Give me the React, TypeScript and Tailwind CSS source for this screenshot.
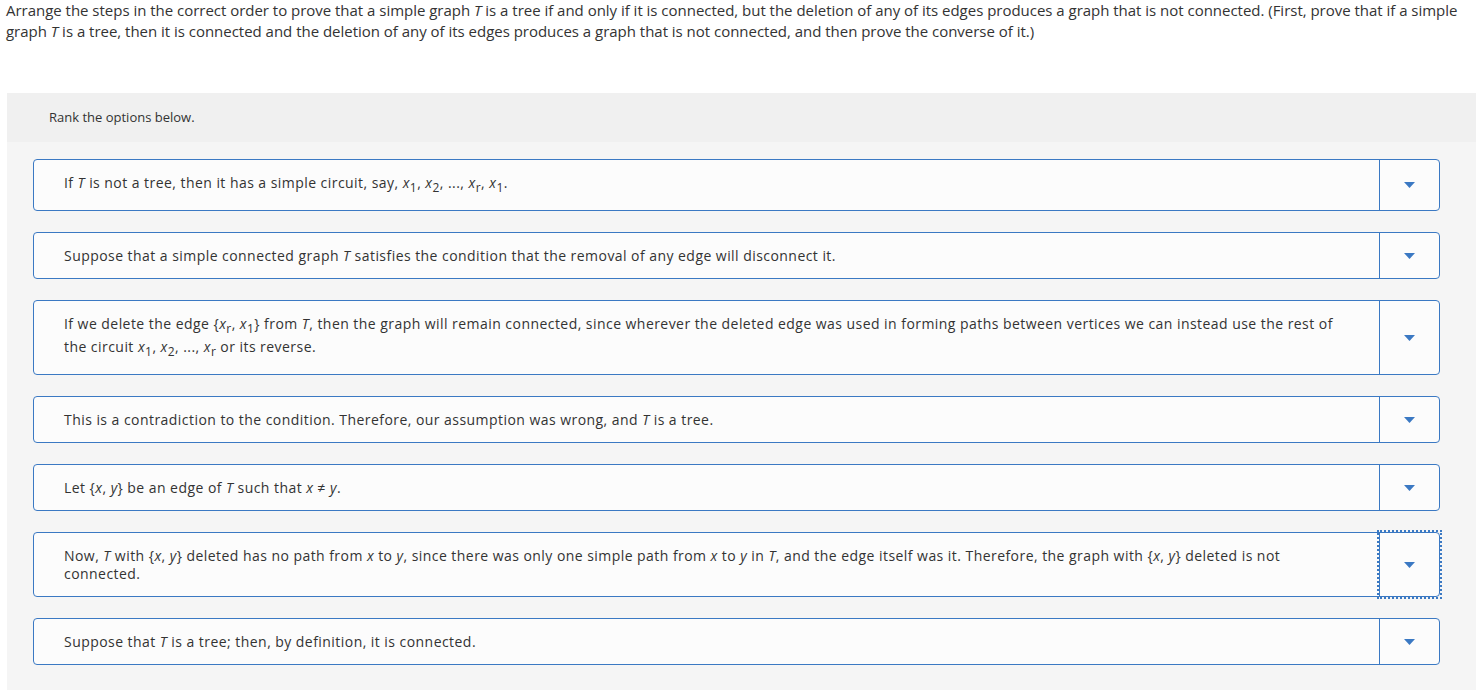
import * as React from "react";

const I = ({ children }: { children: React.ReactNode }) => <i className="italic">{children}</i>;
const X = ({ s }: { s: string }) => (
  <>
    <i>x</i>
    <sub className="bottom-0 align-[-4px] text-[12px] leading-[18px]">{s}</sub>
  </>
);

const options: { id: number; content: React.ReactNode; focused?: boolean }[] = [
  {
    id: 1,
    content: (
      <>
        If <I>T</I> is not a tree, then it has a simple circuit, say, <X s="1" />, <X s="2" />, ..., <X s="r" />, <X s="1" />.
      </>
    ),
  },
  {
    id: 2,
    content: (
      <>
        Suppose that a simple connected graph <I>T</I> satisfies the condition that the removal of any edge will disconnect it.
      </>
    ),
  },
  {
    id: 3,
    content: (
      <>
        If we delete the edge {"{"}
        <X s="r" />, <X s="1" />
        {"}"} from <I>T</I>, then the graph will remain connected, since wherever the deleted edge was used in forming paths between
        vertices we can instead use the rest of the circuit <X s="1" />, <X s="2" />, ..., <X s="r" /> or its reverse.
      </>
    ),
  },
  {
    id: 4,
    content: (
      <>
        This is a contradiction to the condition. Therefore, our assumption was wrong, and <I>T</I> is a tree.
      </>
    ),
  },
  {
    id: 5,
    content: (
      <>
        Let {"{"}
        <I>x</I>, <I>y</I>
        {"}"} be an edge of <I>T</I> such that <I>x</I> ≠ <I>y</I>.
      </>
    ),
  },
  {
    id: 6,
    focused: true,
    content: (
      <>
        Now, <I>T</I> with {"{"}
        <I>x</I>, <I>y</I>
        {"}"} deleted has no path from <I>x</I> to <I>y</I>, since there was only one simple path from <I>x</I> to <I>y</I> in{" "}
        <I>T</I>, and the edge itself was it. Therefore, the graph with {"{"}
        <I>x</I>, <I>y</I>
        {"}"} deleted is not connected.
      </>
    ),
  },
  {
    id: 7,
    content: (
      <>
        Suppose that <I>T</I> is a tree; then, by definition, it is connected.
      </>
    ),
  },
];

function Caret() {
  return (
    <svg width="11" height="6" viewBox="0 0 11 6" className="block">
      <polygon points="0,0 11,0 5.5,6" fill="#3b79c3" />
    </svg>
  );
}

export default function App() {
  return (
    <div className="min-h-[690px] bg-white font-['Open_Sans',Arial,sans-serif] text-[#333]">
      <p className="pl-[6px] pr-[1px] text-[15px] leading-[21px] tracking-[-0.02px] text-[#333]">
        Arrange the steps in the correct order to prove that a simple graph <I>T</I> is a tree if and only if it is connected, but the
        deletion of any of its edges produces a graph that is not connected. (First, prove that if a simple graph <I>T</I> is a tree,
        then it is connected and the deletion of any of its edges produces a graph that is not connected, and then prove the converse of
        it.)
      </p>

      <div className="ml-[7px] mt-[51px] bg-[#f5f5f5]">
        <div className="flex h-[49px] items-center bg-[#f0f0f0] pl-[42px] text-[13px] text-[#333]">Rank the options below.</div>
        <div className="flex flex-col gap-[21px] pb-[25px] pl-[26px] pr-[36px] pt-[17px]">
          {options.map((o) => (
            <div key={o.id} className="flex rounded-[4px] border border-[#3b79c3] bg-[#fcfcfc]">
              <div className="flex flex-1 items-center pb-[13px] pl-[30px] pr-[30px] pt-[14px] text-[14px] leading-[18px] tracking-[0.45px] text-[#333]">
                <span>{o.content}</span>
              </div>
              <div className="relative flex w-[60px] shrink-0 items-center justify-center border-l border-[#3b79c3]">
                {o.focused && (
                  <div className="pointer-events-none absolute -bottom-[3px] -left-[3px] -right-[3px] -top-[3px] border-2 border-dotted border-[#3b79c3]" />
                )}
                <Caret />
              </div>
            </div>
          ))}
        </div>
      </div>
    </div>
  );
}
